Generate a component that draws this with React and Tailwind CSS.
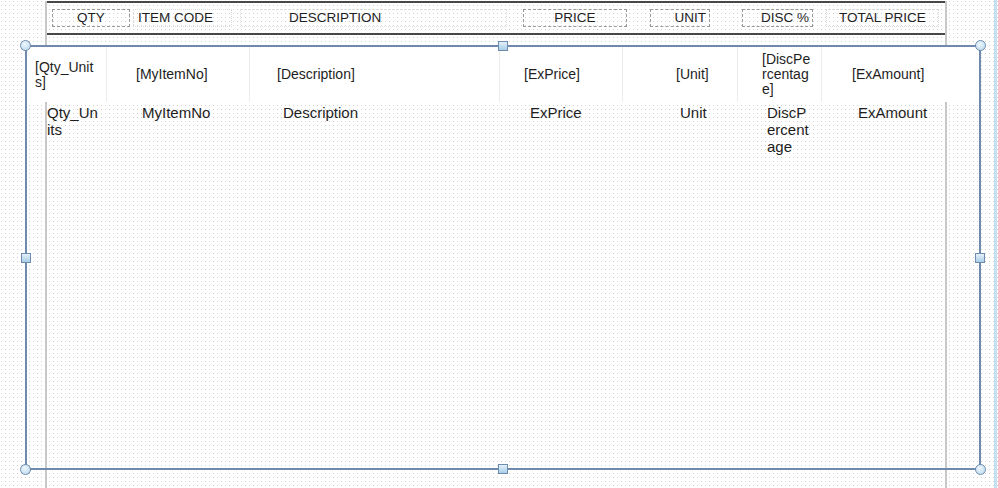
import React from 'react';

const font = { fontFamily: '"Liberation Sans", Arial, sans-serif' };

const bandCells = [
  { w: 'w-[80px]', pl: 'pl-[8px]', text: '[Qty_Units]', box: 'w-[60px] break-all' },
  { w: 'w-[143px]', pl: 'pl-[29px]', text: '[MyItemNo]' },
  { w: 'w-[250px]', pl: 'pl-[27px]', text: '[Description]' },
  { w: 'w-[123px]', pl: 'pl-[24px]', text: '[ExPrice]' },
  { w: 'w-[115px]', pl: 'pl-[53px]', text: '[Unit]' },
  { w: 'w-[84px]', pl: 'pl-[24px]', text: '[DiscPercentage]', box: 'w-[50px] break-all' },
  { w: 'flex-1', pl: 'pl-[30px]', text: '[ExAmount]', last: true },
];

const detailCells = [
  { w: 'w-[80px]', pl: 'pl-[20px]', text: 'Qty_Units', box: 'w-[52px] break-all' },
  { w: 'w-[143px]', pl: 'pl-[35px]', text: 'MyItemNo' },
  { w: 'w-[250px]', pl: 'pl-[33px]', text: 'Description' },
  { w: 'w-[123px]', pl: 'pl-[30px]', text: 'ExPrice' },
  { w: 'w-[115px]', pl: 'pl-[57px]', text: 'Unit' },
  { w: 'w-[84px]', pl: 'pl-[29px]', text: 'DiscPercentage', box: 'w-[44px] break-all' },
  { w: 'flex-1', pl: 'pl-[36px]', text: 'ExAmount' },
];

const Corner = ({ className }) => (
  <div className={`absolute w-[11px] h-[11px] rounded-full border border-[#6d8cb0] bg-[radial-gradient(circle_at_40%_35%,#eef7fd,#b7d6ec)] ${className}`} />
);

const Square = ({ className }) => (
  <div className={`absolute w-[10px] h-[10px] border border-[#6d8cb0] bg-[linear-gradient(#e3f1fb,#a9cde6)] ${className}`} />
);

export default function App() {
  return (
    <div
      style={font}
      className="relative w-[998px] h-[488px] overflow-hidden bg-[#d2d2d2] bg-[linear-gradient(90deg,#fff_3px,transparent_3px),linear-gradient(#fff_3px,transparent_3px)] bg-size-[4px_4px] bg-position-[2px_2px] text-[#1e1e1e]"
    >
      {/* page column with margin lines */}
      <div className="ml-[45px] w-[902px] h-full border-x-2 border-[#c8c8c8]">
        {/* page header */}
        <div className="mt-[1px] h-[34px] border-y-2 border-[#474747] flex items-center text-[13.5px] leading-none">
          <div className="ml-[5px] w-[78px] h-[18px] border border-dashed border-[#9a9a9a] flex items-center justify-center">QTY</div>
          <div className="ml-[3px] w-[99px] h-[18px] border border-dotted border-[#dcdcdc] flex items-center pl-[4px]">ITEM CODE</div>
          <div className="ml-[8px] w-[267px] h-[18px] border border-dotted border-[#e2e2e2] flex items-center pl-[48px]">DESCRIPTION</div>
          <div className="ml-[16px] w-[104px] h-[18px] border border-dashed border-[#9a9a9a] flex items-center justify-center">PRICE</div>
          <div className="ml-[23px] w-[60px] h-[18px] border border-dashed border-[#9a9a9a] flex items-center justify-end pr-[3px]">UNIT</div>
          <div className="ml-[32px] w-[71px] h-[18px] border border-dashed border-[#9a9a9a] flex items-center justify-end pr-[3px]">DISC %</div>
          <div className="ml-[13px] w-[113px] h-[18px] border border-dotted border-[#dcdcdc] flex items-center justify-center">TOTAL PRICE</div>
        </div>

        {/* selected table */}
        <div className="relative mt-[10px] -ml-[22px] w-[956px] h-[425px] border-2 border-[#6f8aad]">
          <div className="flex h-[55px] bg-white text-[14px] leading-[15px]">
            {bandCells.map((c) => (
              <div
                key={c.text}
                className={`${c.w} ${c.pl} flex items-center ${c.last ? '' : 'border-r border-[#ececec]'}`}
              >
                <div className={c.box || ''}>{c.text}</div>
              </div>
            ))}
          </div>
          <div className="flex pt-[2px] text-[15px] leading-[17px]">
            {detailCells.map((c) => (
              <div key={c.text} className={`${c.w} ${c.pl}`}>
                <div className={c.box || ''}>{c.text}</div>
              </div>
            ))}
          </div>

          <Corner className="-left-[7px] -top-[7px]" />
          <Corner className="-right-[7px] -top-[7px]" />
          <Corner className="-left-[7px] -bottom-[7px]" />
          <Corner className="-right-[7px] -bottom-[7px]" />
          <Square className="left-1/2 -translate-x-1/2 -top-[6px]" />
          <Square className="left-1/2 -translate-x-1/2 -bottom-[6px]" />
          <Square className="top-1/2 -translate-y-1/2 -left-[6px]" />
          <Square className="top-1/2 -translate-y-1/2 -right-[6px]" />
        </div>
      </div>

      {/* right edge strip */}
      <div className="absolute top-0 right-[1px] w-[3px] h-full bg-[#c4e0f1]" />
    </div>
  );
}
